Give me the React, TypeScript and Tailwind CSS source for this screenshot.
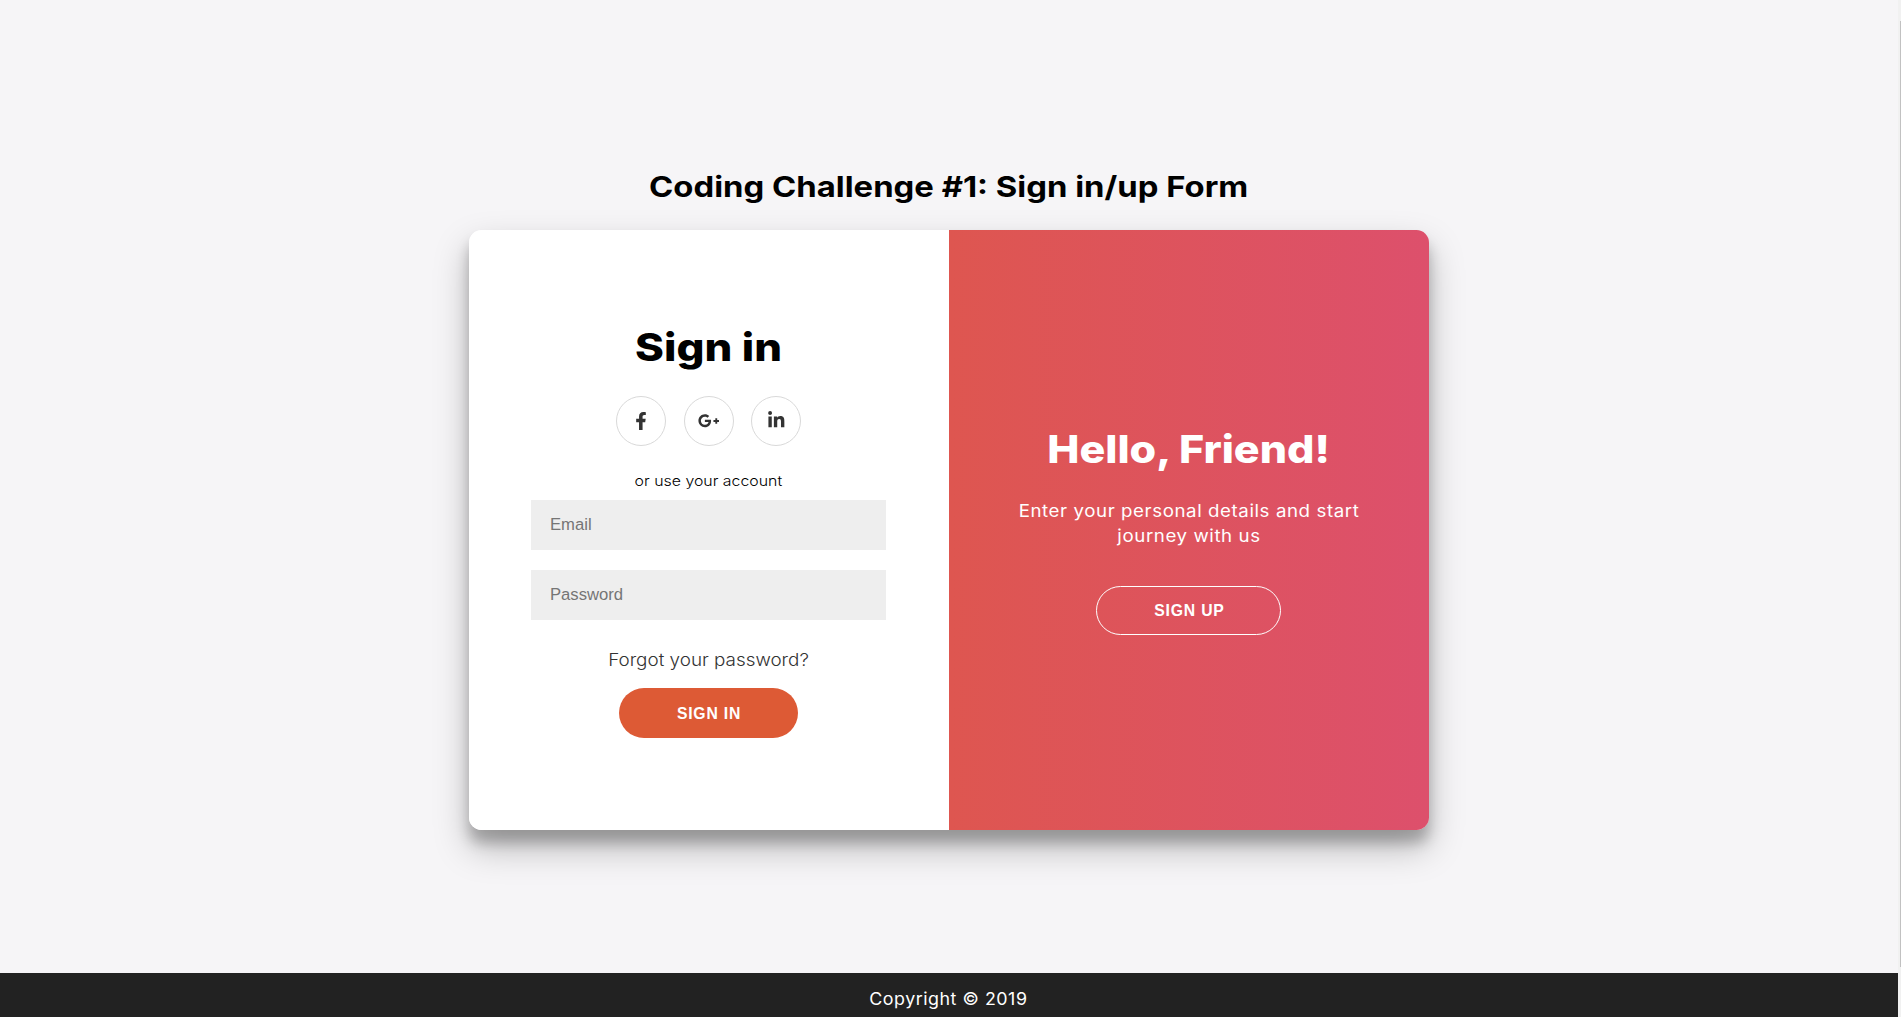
import React from 'react';
import { FaFacebookF, FaGooglePlusG, FaLinkedinIn } from 'react-icons/fa';

const socials = [
  { label: 'Facebook', Icon: FaFacebookF, size: 'h-[18px]' },
  { label: 'Google Plus', Icon: FaGooglePlusG, size: 'h-[21.5px]' },
  { label: 'LinkedIn', Icon: FaLinkedinIn, size: 'h-[18.5px]' },
];

function SignInForm() {
  return (
    <form
      className="flex w-1/2 flex-col items-center bg-white pt-[93px] pr-[2px]"
      onSubmit={(e) => e.preventDefault()}
    >
      <h1 className="ml-0.5 scale-x-[1.138] text-[38.5px] leading-[48px] font-extrabold text-black">Sign in</h1>
      <div className="mt-[25px] ml-px flex gap-[17.5px]">
        {socials.map(({ label, Icon, size }) => (
          <a
            key={label}
            href="#"
            aria-label={label}
            className="flex size-[50px] items-center justify-center rounded-full border border-[#d9d9d9] text-[#333333]"
          >
            <Icon className={`-mt-px w-auto ${size}`} />
          </a>
        ))}
      </div>
      <span className="mt-[25px] scale-x-[1.095] text-[14.5px] leading-5 font-light text-black">
        or use your account
      </span>
      <input
        type="email"
        placeholder="Email"
        className="mt-[9px] h-[50px] w-[355px] bg-[#eeeeee] px-[19.5px] font-['Liberation_Sans',sans-serif] text-[16.67px] outline-none placeholder:text-[#757575]"
      />
      <input
        type="password"
        placeholder="Password"
        className="mt-5 h-[50px] w-[355px] bg-[#eeeeee] px-[19.5px] font-['Liberation_Sans',sans-serif] text-[16.67px] outline-none placeholder:text-[#757575]"
      />
      <a href="#" className="mt-7 scale-x-[1.109] text-[17px] leading-6 font-light text-[#333333]">
        Forgot your password?
      </a>
      <button className="mt-4 h-[50px] w-[179px] rounded-full bg-[#dd5a35] pt-px pl-0.5 font-['Liberation_Sans',sans-serif] text-[15.75px] font-bold tracking-[0.8px] text-white">
        SIGN IN
      </button>
    </form>
  );
}

function WelcomePanel() {
  return (
    <section className="flex w-1/2 flex-col items-center bg-linear-to-r/srgb from-[#de5650] to-[#dd506c] pt-[195px] pr-px text-white">
      <h1 className="ml-px scale-x-[1.117] text-[38.5px] leading-[48px] font-extrabold">Hello, Friend!</h1>
      <p className="mt-[26px] w-[320px] scale-x-110 text-center text-[17px] leading-[25px] tracking-[0.52px]">
        Enter your personal details and start journey with us
      </p>
      <button className="mt-[37px] h-[49px] w-[185px] rounded-full border border-white pt-px pl-0.5 font-['Liberation_Sans',sans-serif] text-[15.75px] font-bold tracking-[0.8px]">
        SIGN UP
      </button>
    </section>
  );
}

export default function App() {
  return (
    <div className="flex h-[1017px] overflow-hidden bg-[#f6f5f7] font-[Inter,sans-serif]">
      <div className="flex flex-1 flex-col items-center">
        <h2 className="mt-[166px] scale-x-[1.132] text-[29px] leading-[41px] font-bold whitespace-nowrap text-black">
          Coding Challenge #1: Sign in/up Form
        </h2>
        <main className="mt-[23px] h-[600px] w-[960px] rounded-[12.5px] shadow-[0_17.5px_35px_rgba(0,0,0,0.25),0_12.5px_12.5px_rgba(0,0,0,0.22)]">
          <div className="flex h-full overflow-hidden rounded-[12.5px]">
            <SignInForm />
            <WelcomePanel />
          </div>
        </main>
        <footer className="mt-[143px] flex w-full flex-1 justify-center bg-[#222222] pt-3.5 pr-px">
          <p className="scale-x-105 text-[17px] leading-6 tracking-[0.5px] text-white">Copyright © 2019</p>
        </footer>
      </div>
      <div className="flex w-[3px] justify-end bg-[#f1f1f1] pt-[21px]">
        <div className="h-[946px] w-px bg-[#c1c1c1]" />
      </div>
    </div>
  );
}
